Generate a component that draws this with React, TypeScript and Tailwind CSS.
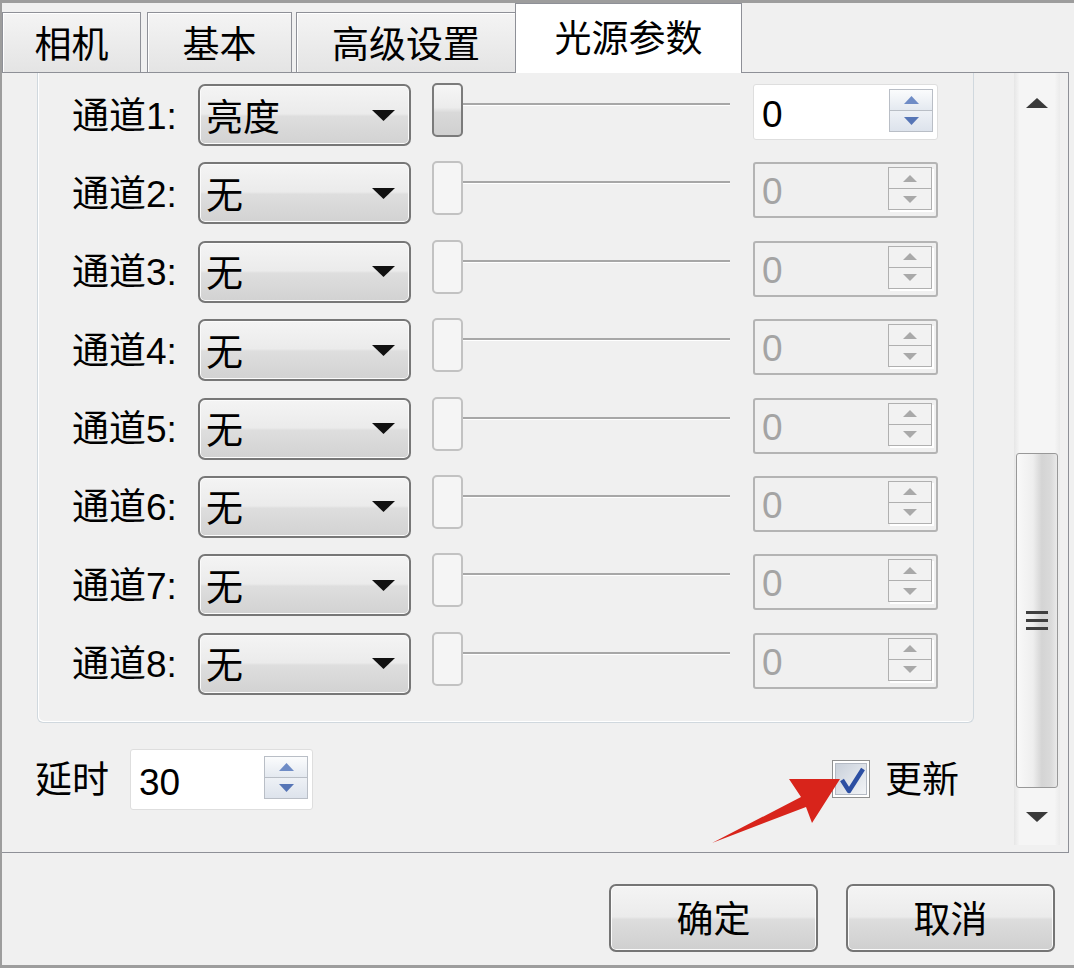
import type { ReactNode } from "react";

type Row = { n: number; value: string; enabled: boolean };

const ROWS: Row[] = [
    { n: 1, value: "亮度", enabled: true },
    { n: 2, value: "无", enabled: false },
    { n: 3, value: "无", enabled: false },
    { n: 4, value: "无", enabled: false },
    { n: 5, value: "无", enabled: false },
    { n: 6, value: "无", enabled: false },
    { n: 7, value: "无", enabled: false },
    { n: 8, value: "无", enabled: false },
];

function Tri({ up, w, h, fill }: { up?: boolean; w: number; h: number; fill: string }) {
    const pts = up ? `0,${h} ${w / 2},0 ${w},${h}` : `0,0 ${w},0 ${w / 2},${h}`;
    return (
        <svg width={w} height={h} viewBox={`0 0 ${w} ${h}`} aria-hidden>
            <polygon points={pts} fill={fill} />
        </svg>
    );
}

function SpinButtons({ enabled }: { enabled: boolean }) {
    return enabled ? (
        <div className="flex h-[43px] w-[44px] flex-col border border-[#b9bec6] bg-[#f3f5f8]">
            <div className="flex flex-1 items-center justify-center border-b border-[#b9bec6] bg-[linear-gradient(#fbfcfd,#e4e9f0)]">
                <Tri up w={15} h={8} fill="#6f8cc6" />
            </div>
            <div className="flex flex-1 items-center justify-center bg-[linear-gradient(#eef1f6,#dde3ec)]">
                <Tri w={15} h={8} fill="#5675b6" />
            </div>
        </div>
    ) : (
        <div className="flex h-[43px] w-[44px] flex-col border border-[#b0b0b0] bg-[#f2f2f2] shadow-[2px_2px_0_#fff]">
            <div className="flex flex-1 items-center justify-center border-b border-[#b0b0b0]">
                <Tri up w={14} h={7} fill="#a9a9a9" />
            </div>
            <div className="flex flex-1 items-center justify-center">
                <Tri w={14} h={7} fill="#a9a9a9" />
            </div>
        </div>
    );
}

function SpinBox({ value, enabled, className }: { value: string; enabled: boolean; className: string }) {
    return (
        <div
            className={
                enabled
                    ? `flex items-start justify-between rounded-[3px] border border-[#dedede] bg-white pr-[4px] pt-[4px] ${className}`
                    : `flex items-start justify-between rounded-[3px] border-2 border-[#b4b4b4] bg-[#f0f0f0] pr-[4px] pt-[3px] ${className}`
            }
        >
            <span className={enabled ? "self-center pl-[8px] text-black" : "self-center pl-[7px] text-[#a4a4a4]"}>
                {value}
            </span>
            <SpinButtons enabled={enabled} />
        </div>
    );
}

function Combo({ value }: { value: string }) {
    return (
        <div className="flex h-[62px] w-[213px] items-center justify-between rounded-[7px] border-2 border-[#777777] bg-[linear-gradient(#f4f4f4_0%,#ebebeb_48%,#dedede_52%,#d2d2d2_100%)] pl-[6px] pr-[14px] shadow-[inset_0_0_0_1px_#fbfbfb]">
            <span className="pt-[6px]">{value}</span>
            <Tri w={23} h={11} fill="#111111" />
        </div>
    );
}

function Slider({ enabled }: { enabled: boolean }) {
    return (
        <div className="relative ml-[21px] h-[62px] w-[298px]">
            <div className="absolute left-[16px] right-0 top-[19px] h-[3px] border-b border-white bg-[#a7a7a7]" />
            <div
                className={
                    enabled
                        ? "absolute left-0 top-[-1px] h-[54px] w-[31px] rounded-[5px] border-2 border-[#7b7b7b] bg-[linear-gradient(#f6f6f6_0%,#ececec_45%,#d9d9d9_55%,#d0d0d0_100%)]"
                        : "absolute left-0 top-[-1px] h-[54px] w-[31px] rounded-[5px] border-2 border-[#c2c2c2] bg-[#f5f5f5]"
                }
            />
        </div>
    );
}

function Tab({ children, className }: { children: ReactNode; className: string }) {
    return (
        <div
            className={`flex h-[60px] items-center justify-center border border-b-0 border-[#8e9097] bg-[linear-gradient(#f4f4f4,#e4e4e4)] pt-[6px] shadow-[inset_1px_1px_0_#fff] ${className}`}
        >
            {children}
        </div>
    );
}

function Button({ children }: { children: ReactNode }) {
    return (
        <div className="flex h-[68px] w-[209px] items-center justify-center rounded-[7px] border-2 border-[#757575] bg-[linear-gradient(#f4f4f4_0%,#ebebeb_48%,#dddddd_52%,#cfcfcf_100%)] pt-[4px] shadow-[inset_0_0_0_1px_#fbfbfb]">
            {children}
        </div>
    );
}

export default function App() {
    return (
        <div className="relative h-[968px] w-[1074px] overflow-hidden border-b-[3px] border-l-2 border-t-[3px] border-[#9d9d9d] bg-[#f0f0f0] font-[family-name:'Liberation_Sans','Noto_Sans_CJK_SC',sans-serif] text-[37px] leading-none text-black">
            {/* tab strip */}
            <div className="flex h-[69px] items-end">
                <Tab className="w-[139px]">相机</Tab>
                <Tab className="ml-[6px] w-[145px]">基本</Tab>
                <Tab className="ml-[4px] w-[220px]">高级设置</Tab>
                <div className="relative z-10 -mb-px -ml-px flex h-[70px] w-[227px] items-center justify-center border border-b-0 border-[#8e9097] bg-white pt-[2px]">
                    光源参数
                </div>
            </div>

            {/* tab pane */}
            <div className="flex h-[781px] w-[1067px] border-b border-r border-t border-[#8e9097]">
                <div className="flex w-[1012px] flex-col">
                    <div className="ml-[35px] flex w-[937px] flex-col gap-[16.4px] rounded-b-[6px] border-b border-l border-r border-[#d0d8de] pb-[27px] pl-[34px] pt-[11px] shadow-[inset_1px_-1px_0_#fff]">
                        {ROWS.map((row) => (
                            <div key={row.n} className="flex h-[62px] items-start">
                                <span className="flex h-[62px] w-[126px] items-center pt-[2px]">
                                    通道{row.n}:
                                </span>
                                <Combo value={row.value} />
                                <Slider enabled={row.enabled} />
                                <SpinBox value="0" enabled={row.enabled} className="ml-[23px] h-[56px] w-[185px]" />
                            </div>
                        ))}
                    </div>

                    <div className="ml-[33px] mt-[26px] flex h-[61px] items-center">
                        <span className="w-[95px] pt-[2px]">延时</span>
                        <SpinBox value="30" enabled className="h-[61px] w-[183px] pt-[6px]" />
                        <div className="ml-[519px] flex items-center gap-[15px]">
                            <div className="flex h-[38px] w-[38px] items-center justify-center border border-[#8e8f8f] bg-white p-[2px]">
                                <div className="relative h-full w-full border border-[#b4bac4] bg-[linear-gradient(135deg,#c9d0da,#f2f4f7)]">
                                    <svg className="absolute left-0 top-0" width="32" height="32" viewBox="0 0 32 32" aria-hidden>
                                        <path d="M6 16 L13 27 L27 5" fill="none" stroke="#2c4fa3" strokeWidth="4.5" strokeLinejoin="round" />
                                    </svg>
                                </div>
                            </div>
                            <span className="pt-[2px]">更新</span>
                        </div>
                    </div>
                </div>

                {/* scrollbar */}
                <div className="flex h-[772px] w-[46px] flex-col bg-[linear-gradient(to_right,#e6e6e6,#f5f5f5_12%,#f5f5f5_88%,#ebebeb)]">
                    <div className="flex h-[62px] items-center justify-center pb-[2px]">
                        <Tri up w={22} h={10} fill="#3a3a3a" />
                    </div>
                    <div className="h-[318px]" />
                    <div className="mx-[2px] flex h-[335px] items-center justify-center rounded-[3px] border border-[#989898] bg-[linear-gradient(to_right,#f9f9f9_0%,#eeeeee_40%,#d4d4d4_62%,#dadada_85%,#e9e9e9_100%)]">
                        <div className="flex w-[22px] flex-col gap-[5px]">
                            <div className="h-[3px] bg-[#3f3f3f]" />
                            <div className="h-[3px] bg-[#3f3f3f]" />
                            <div className="h-[3px] bg-[#3f3f3f]" />
                        </div>
                    </div>
                    <div className="flex flex-1 items-center justify-center">
                        <Tri w={22} h={10} fill="#3a3a3a" />
                    </div>
                </div>
            </div>

            {/* dialog buttons */}
            <div className="flex justify-end gap-[28px] pr-[19px] pt-[31px]">
                <Button>确定</Button>
                <Button>取消</Button>
            </div>

            {/* annotation arrow */}
            <svg className="pointer-events-none absolute left-[-2px] top-[-3px]" width="1074" height="968" viewBox="0 0 1074 968" aria-hidden>
                <polygon
                    points="712,843 801,797 789,779 840,779 812,823 806,807"
                    fill="#d8241b"
                />
            </svg>
        </div>
    );
}
